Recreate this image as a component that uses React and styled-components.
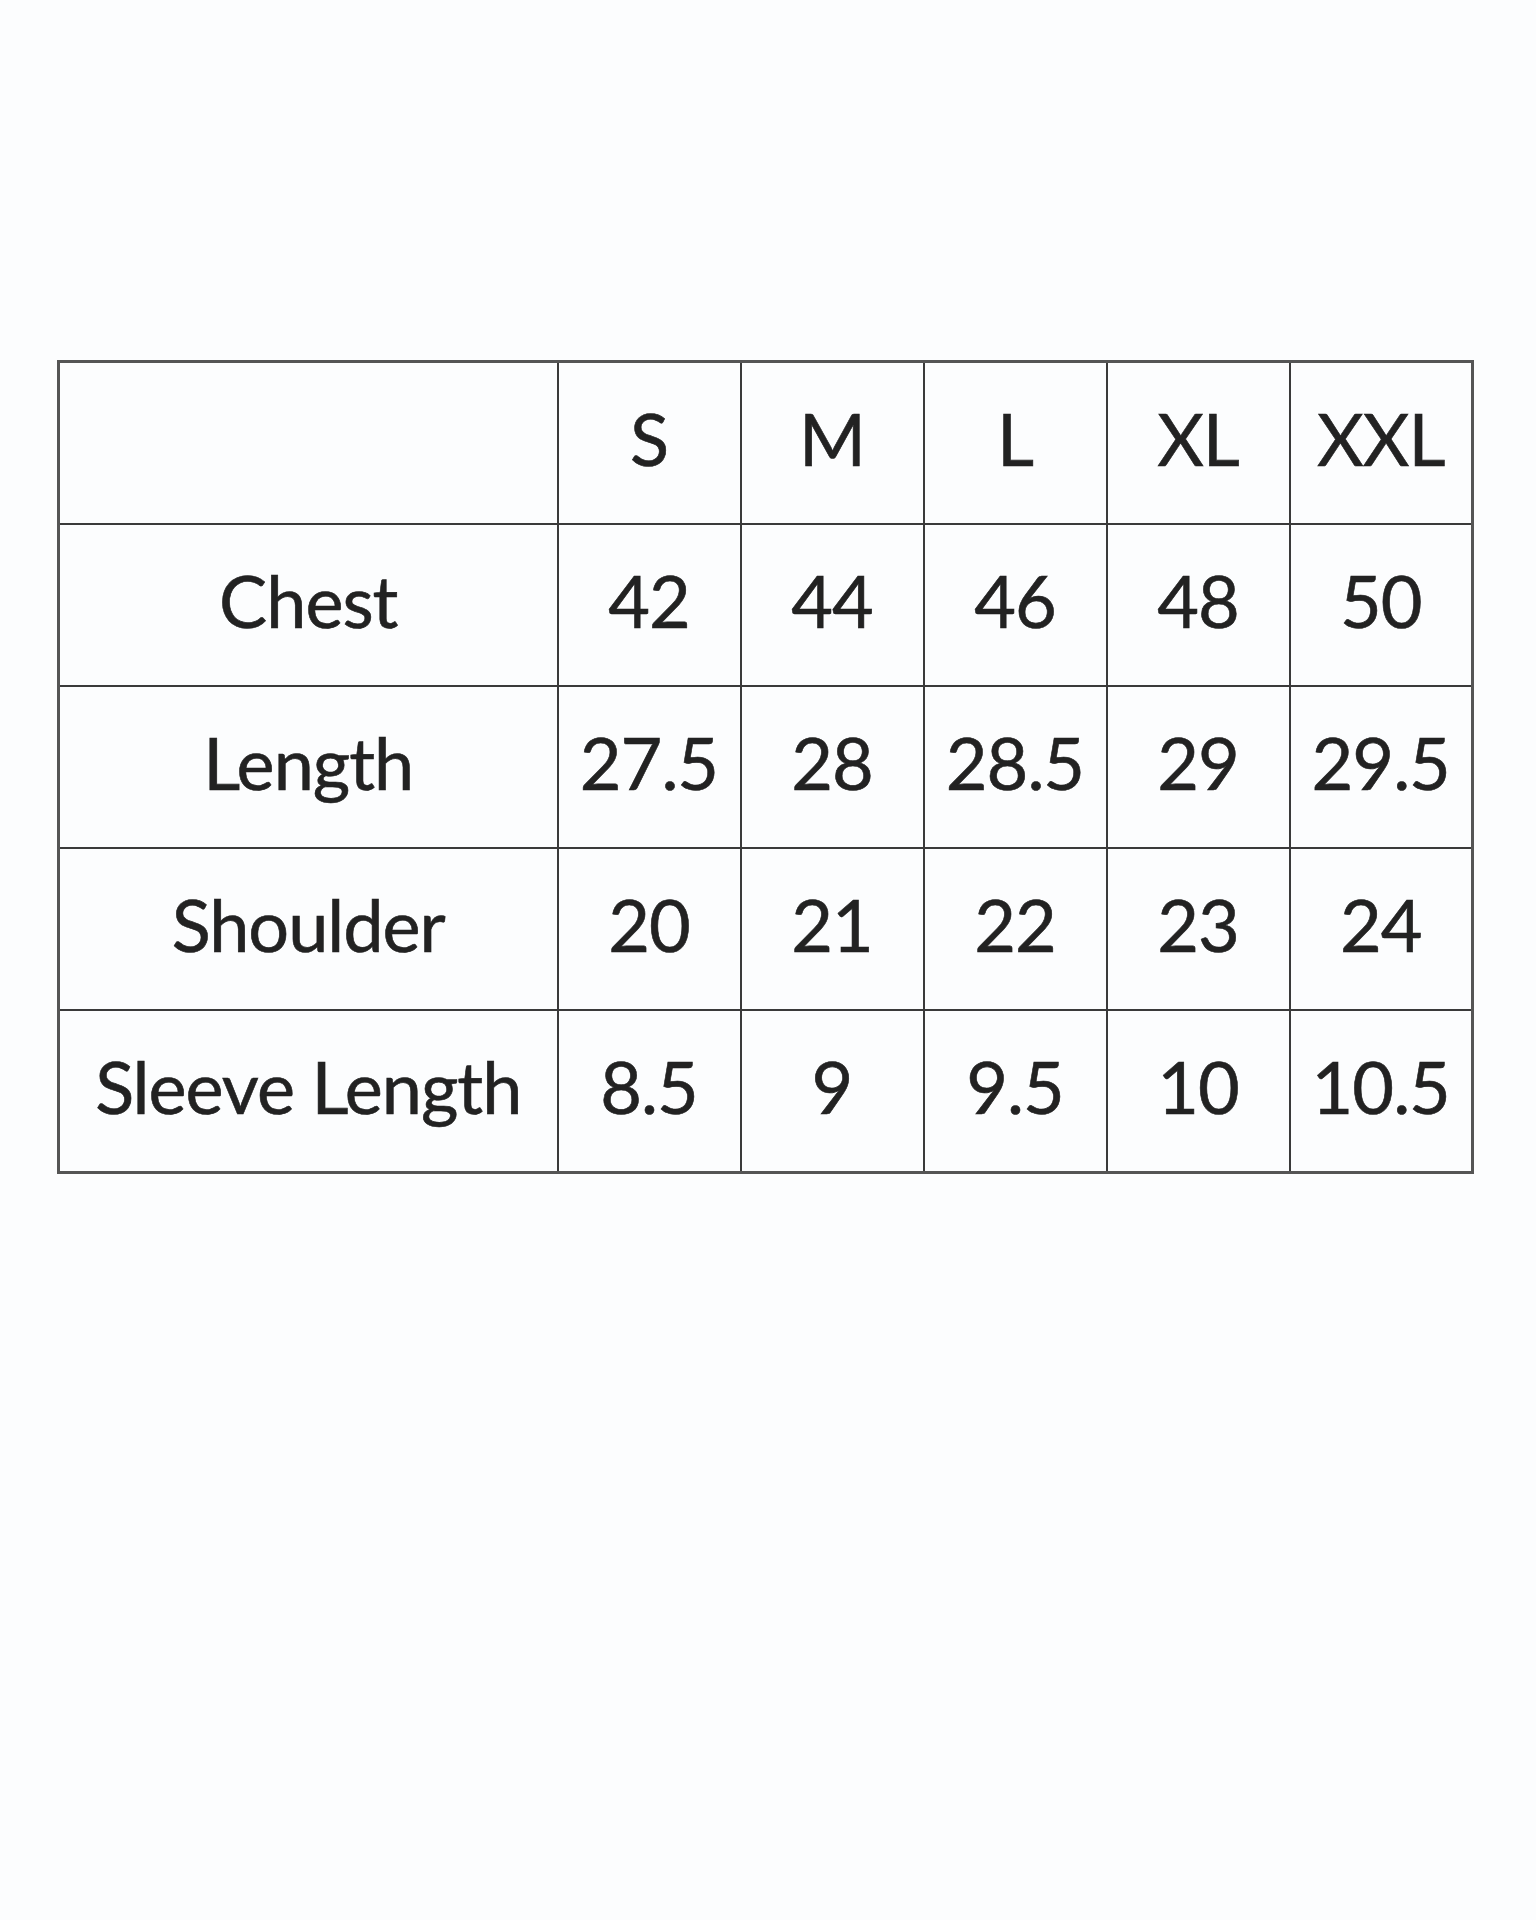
import styled, { createGlobalStyle } from 'styled-components';

const GlobalStyle = createGlobalStyle`
  html, body {
    margin: 0;
    padding: 0;
    background: #fcfdfe;
  }
  body {
    font-family: Lato, "Open Sans", sans-serif;
    color: #222;
  }
`;

const sizes = ['S', 'M', 'L', 'XL', 'XXL'];

const rows = [
  { label: 'Chest', values: ['42', '44', '46', '48', '50'] },
  { label: 'Length', values: ['27.5', '28', '28.5', '29', '29.5'] },
  { label: 'Shoulder', values: ['20', '21', '22', '23', '24'] },
  { label: 'Sleeve Length', values: ['8.5', '9', '9.5', '10', '10.5'] },
];

function SizeChart() {
  return (
    <Page>
      <ChartTable>
        <colgroup>
          <LabelCol />
          {sizes.map((s) => (
            <SizeCol key={s} />
          ))}
        </colgroup>
        <thead>
          <tr>
            <Cell />
            {sizes.map((s) => (
              <Cell key={s}>{s}</Cell>
            ))}
          </tr>
        </thead>
        <tbody>
          {rows.map((row) => (
            <tr key={row.label}>
              <Cell>{row.label}</Cell>
              {row.values.map((v, i) => (
                <Cell key={i}>{v}</Cell>
              ))}
            </tr>
          ))}
        </tbody>
      </ChartTable>
    </Page>
  );
}

export default function App() {
  return (
    <>
      <GlobalStyle />
      <SizeChart />
    </>
  );
}

const Page = styled.div`
  min-height: 1920px;
  padding-top: 360px;
  padding-left: 57px;
  box-sizing: border-box;
`;

const ChartTable = styled.table`
  border-collapse: collapse;
  table-layout: fixed;
  width: 1415px;
  border: 3px solid #555;
`;

const LabelCol = styled.col`
  width: 499px;
`;

const SizeCol = styled.col`
  width: 183px;
`;

const Cell = styled.td`
  height: 150px;
  padding: 0 0 10px;
  box-sizing: content-box;
  border: 2px solid #3a3a3a;
  text-align: center;
  vertical-align: middle;
  font-size: 72px;
  font-weight: 400;
  letter-spacing: -1px;
  line-height: 1;
  color: #222;
  -webkit-text-stroke: 0.6px #222;
  white-space: nowrap;
`;
